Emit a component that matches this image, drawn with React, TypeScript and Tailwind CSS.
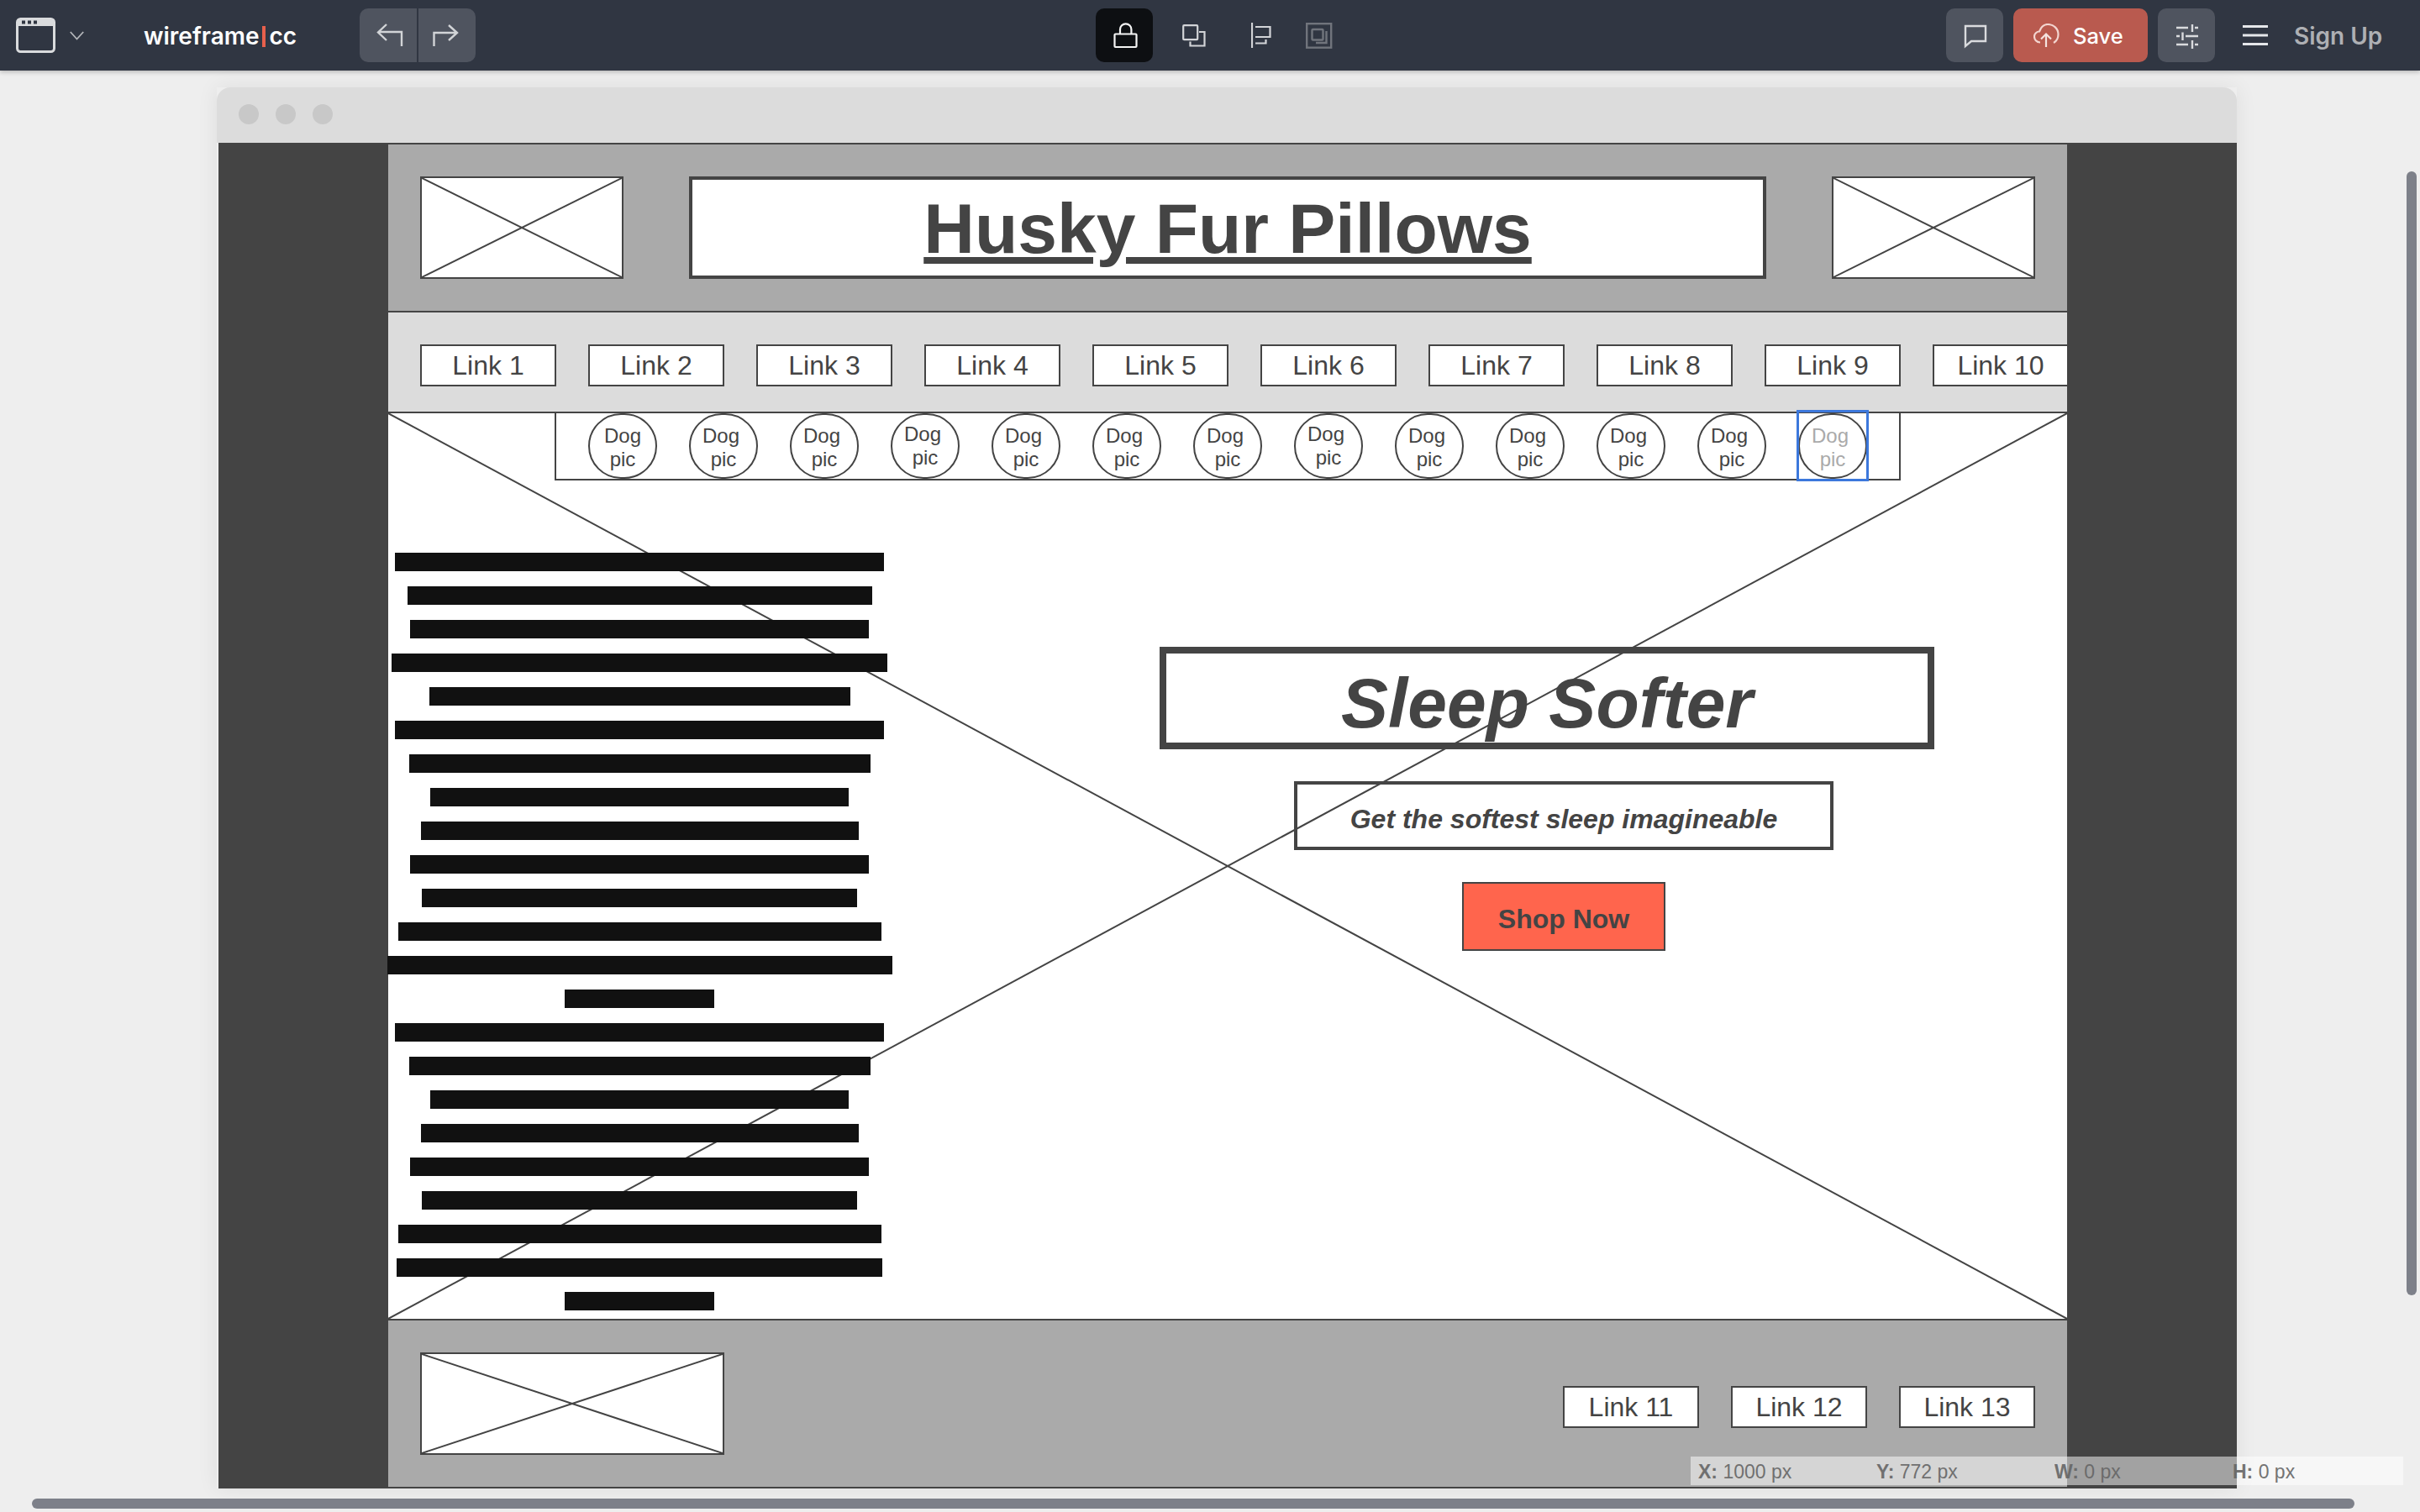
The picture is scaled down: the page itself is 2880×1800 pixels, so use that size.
import React from "react";

const BARS = [582, 553, 546, 590, 501, 582, 549, 498, 521, 546, 518, 575, 601, 178, 582, 549, 498, 521, 546, 518, 575, 578, 178];

function Placeholder({ w, h }: { w: number; h: number }) {
  return (
    <div className="shrink-0 border-2 border-[#444] bg-white" style={{ width: w, height: h }}>
      <svg className="block h-full w-full" viewBox={`0 0 ${w - 4} ${h - 4}`} preserveAspectRatio="none">
        <line x1="0" y1="0" x2={w - 4} y2={h - 4} stroke="#444" strokeWidth="2" />
        <line x1={w - 4} y1="0" x2="0" y2={h - 4} stroke="#444" strokeWidth="2" />
      </svg>
    </div>
  );
}

function LinkBox({ label }: { label: string }) {
  return (
    <div className="flex h-[50px] w-[162px] shrink-0 items-center justify-center border-2 border-[#444] bg-white text-[32px] leading-none text-[#444]">
      {label}
    </div>
  );
}

function DogCircle({ i }: { i: number }) {
  const last = i === 12;
  const first = i === 0;
  const raised = i === 3 || i === 7;
  return (
    <div className="relative h-[78px] w-[82px] shrink-0">
      <div
        className={
          "flex h-full w-full flex-col items-center justify-center rounded-full border-2 border-[#444] text-center text-[24px] leading-[28px] " +
          (last ? "text-[#aaa] " : "text-[#444] ") +
          (raised ? "" : "pt-[3px]")
        }
      >
        <span className={first ? "" : "pr-[6px]"}>Dog</span>
        <span>pic</span>
      </div>
      {last && <div className="absolute left-[-2px] top-[-4px] h-[85px] w-[86px] border-[3px] border-[#3c78dc]" />}
    </div>
  );
}

function Toolbar() {
  const ic = "#d2d4d7";
  return (
    <header className="relative z-10 flex h-[84px] items-center bg-[#303642] shadow-[0_2px_5px_rgba(0,0,0,0.22)] font-['Inter',sans-serif]">
      <div className="flex w-[1304px] shrink-0 items-center">
        <svg className="ml-[19px] shrink-0" width="47" height="42" viewBox="0 0 47 42">
          <rect x="1.5" y="1.5" width="44" height="39" rx="4" fill="none" stroke="#d9dbdd" strokeWidth="3" />
          <path d="M2 9 V5 Q2 1 6 1 H41 Q45 1 45 5 V9 Z" fill="#d9dbdd" />
          <rect x="2" y="8" width="43" height="2" fill="#d9dbdd" />
          <rect x="7" y="3.5" width="4" height="4" fill="#303642" />
          <rect x="14" y="3.5" width="4" height="4" fill="#303642" />
          <rect x="21" y="3.5" width="4" height="4" fill="#303642" />
        </svg>
        <svg className="ml-[17px] shrink-0" width="17" height="11" viewBox="0 0 17 11">
          <path d="M0.8 1 L8.5 9.5 L16.2 1" fill="none" stroke="#b4b6ba" strokeWidth="1.8" />
        </svg>
        <div className="ml-[71px] flex w-[186px] items-center pt-[2px] text-[28px] font-semibold leading-none text-white">
          <span>wireframe</span>
          <span className="mx-[4px] h-[25px] w-[4px] bg-[#e8604c]" />
          <span>cc</span>
        </div>
        <div className="ml-[71px] flex h-[64px] w-[138px] overflow-hidden rounded-[10px]">
          <div className="h-full w-[68px] bg-[#4f545f]">
            <svg width="68" height="64" viewBox="0 0 68 64">
              <path d="M50 45 V28 H22 M32 19 L22 28.5 L32 38" fill="none" stroke={ic} strokeWidth="2.4" />
            </svg>
          </div>
          <div className="ml-[2px] h-full w-[68px] bg-[#4f545f]">
            <svg width="68" height="64" viewBox="0 0 68 64">
              <path d="M18.5 45 V29 H46 M36 20 L46 29 L36 38" fill="none" stroke={ic} strokeWidth="2.4" />
            </svg>
          </div>
        </div>
      </div>
      <div className="flex w-[1012px] shrink-0 items-center">
        <div className="h-[64px] w-[68px] shrink-0 rounded-[10px] bg-[#0d0f12]">
          <svg width="68" height="64" viewBox="0 0 68 64">
            <rect x="22.5" y="30.5" width="26" height="15.5" rx="1" fill="none" stroke="#f4f4f4" strokeWidth="2.2" />
            <path d="M29 30 V25 A6.7 6.7 0 0 1 42.4 25 V30" fill="none" stroke="#f4f4f4" strokeWidth="2.2" />
          </svg>
        </div>
        <svg className="ml-[35px] shrink-0" width="28" height="27" viewBox="0 0 28 27">
          <rect x="1.2" y="1.2" width="17" height="17" rx="1" fill="none" stroke={ic} strokeWidth="2.2" />
          <path d="M20 9 H26.5 V25.5 H9.5 V20.5" fill="none" stroke={ic} strokeWidth="2.2" />
        </svg>
        <svg className="ml-[54px] shrink-0" width="24" height="30" viewBox="0 0 24 30">
          <path d="M1 0 V30" stroke={ic} strokeWidth="2.2" />
          <path d="M5 5 H22.5 V17 H5" fill="none" stroke={ic} strokeWidth="2.2" />
          <path d="M5 24.5 H17.5 V20" fill="none" stroke={ic} strokeWidth="2.2" />
        </svg>
        <svg className="ml-[41px] shrink-0" width="32" height="31" viewBox="0 0 32 31">
          <rect x="1.2" y="1.2" width="29" height="28.5" fill="none" stroke="#70747c" strokeWidth="2.4" />
          <rect x="7.5" y="8" width="13" height="12.5" rx="1" fill="none" stroke="#70747c" strokeWidth="2.4" />
          <path d="M24.5 10 V24 H12" fill="none" stroke="#70747c" strokeWidth="2.4" />
        </svg>
      </div>
      <div className="flex items-center">
        <div className="h-[64px] w-[68px] shrink-0 rounded-[10px] bg-[#4f545f]">
          <svg width="68" height="64" viewBox="0 0 68 64">
            <path d="M23 21 H47 V39 H30 L23 45 Z" fill="none" stroke="#dadbde" strokeWidth="2.4" />
          </svg>
        </div>
        <div className="ml-[12px] flex h-[64px] w-[160px] shrink-0 items-center rounded-[10px] bg-[#b95a4f] pl-[24px]">
          <svg className="shrink-0" width="31" height="28" viewBox="0 0 31 28">
            <path
              d="M8 22.5 C3.5 22.5 1 19 1 15.5 C1 12 4 9.5 7 9.5 C9 4 13 1 17 1 C24 1 29.5 6 29.5 13 C29.5 17 27.5 21 24 23"
              fill="none"
              stroke="#f3d5d0"
              strokeWidth="2.2"
            />
            <path d="M15 28 V13 M9 18.5 L15 12.5 L21 18.5" fill="none" stroke="#f5e3e0" strokeWidth="2.2" />
          </svg>
          <span className="ml-[16px] pt-[2px] text-[25.5px] font-medium leading-none text-white">Save</span>
        </div>
        <div className="ml-[12px] h-[64px] w-[68px] shrink-0 rounded-[10px] bg-[#4f545f]">
          <svg width="68" height="64" viewBox="0 0 68 64">
            <path
              d="M22 23 H36 M44 23 H48 M41 19 V28 M22 33 H26 M33 33 H48 M29.5 28.5 V38 M22 43 H36 M44 43 H48 M41 38 V48"
              fill="none"
              stroke="#dadbde"
              strokeWidth="2.4"
            />
          </svg>
        </div>
        <svg className="ml-[33px] shrink-0" width="30" height="24" viewBox="0 0 30 24">
          <path d="M0 1.5 H30 M0 12 H30 M0 22.5 H30" stroke="#e5e7ea" strokeWidth="2.8" />
        </svg>
        <span className="ml-[31px] pt-[2px] text-[28px] font-semibold leading-none text-[#aeb0b4]">Sign Up</span>
      </div>
    </header>
  );
}

function Page() {
  const dogs = Array.from({ length: 13 }, (_, i) => i);
  const links = [1, 2, 3, 4, 5, 6, 7, 8, 9, 10];
  return (
    <div className="h-[1600px] w-[1998px] font-['Liberation_Sans',Arial,sans-serif] text-[#444]">
      <div className="flex h-[200px] justify-between border-b-2 border-[#444] bg-[#aaa] px-[38px] pt-[38px]">
        <Placeholder w={242} h={122} />
        <div className="flex h-[122px] w-[1282px] items-center justify-center border-4 border-[#444] bg-white pt-[2px] text-[84px] font-bold leading-none underline">
          Husky Fur Pillows
        </div>
        <Placeholder w={242} h={122} />
      </div>
      <div className="flex h-[120px] gap-[38px] overflow-hidden border-b-2 border-[#444] bg-[#dcdcdc] pl-[38px] pt-[38px]">
        {links.map((n) => (
          <LinkBox key={n} label={`Link ${n}`} />
        ))}
      </div>
      <div className="relative h-[1080px] border-b-2 border-[#444] bg-white">
        <svg className="absolute inset-0 h-full w-full" viewBox="0 0 1998 1078" preserveAspectRatio="none">
          <line x1="0" y1="0" x2="1998" y2="1078" stroke="#444" strokeWidth="2" />
          <line x1="1998" y1="0" x2="0" y2="1078" stroke="#444" strokeWidth="2" />
        </svg>
        <div className="relative">
          <div className="ml-[198px] flex h-[80px] w-[1602px] gap-[38px] border-x-2 border-b-2 border-[#444] bg-white pl-[38px]">
            {dogs.map((i) => (
              <DogCircle key={i} i={i} />
            ))}
          </div>
          <div className="flex">
            <div className="flex w-[598px] shrink-0 flex-col items-center gap-[18px] pt-[86px]">
              {BARS.map((w, i) => (
                <div key={i} className="h-[22px] shrink-0 bg-[#111]" style={{ width: w }} />
              ))}
            </div>
            <div className="flex flex-col items-start pt-[198px]">
              <div className="ml-[320px] flex h-[122px] w-[922px] items-center justify-center border-8 border-[#444] pt-[12px] text-[84px] font-bold italic leading-none">
                Sleep Softer
              </div>
              <div className="ml-[480px] mt-[38px] flex h-[82px] w-[642px] items-center justify-center border-4 border-[#444] pt-[8px] text-[32px] font-bold italic leading-none">
                Get the softest sleep imagineable
              </div>
              <div className="ml-[680px] mt-[38px] flex h-[82px] w-[242px] items-center justify-center border-2 border-[#444] bg-[#ff654d] pt-[5px] text-[32px] font-bold leading-none">
                Shop Now
              </div>
            </div>
          </div>
        </div>
      </div>
      <div className="flex h-[200px] justify-between border-b-2 border-[#444] bg-[#aaa] px-[38px] pt-[38px]">
        <Placeholder w={362} h={122} />
        <div className="flex gap-[38px] pt-[40px]">
          <LinkBox label="Link 11" />
          <LinkBox label="Link 12" />
          <LinkBox label="Link 13" />
        </div>
      </div>
    </div>
  );
}

function Status() {
  const items = [
    ["X:", "1000 px"],
    ["Y:", "772 px"],
    ["W:", "0 px"],
    ["H:", "0 px"],
  ];
  return (
    <div className="absolute left-[2012px] top-[1734px] flex h-[34px] w-[848px] items-center bg-white/50 pl-[9px] pt-[3px] font-['Liberation_Sans',Arial,sans-serif] text-[23px] leading-none text-[#666]">
      {items.map(([a, b]) => (
        <div key={a} className="w-[212px] shrink-0 whitespace-pre opacity-90">
          <span className="font-bold">{a}</span> {b}
        </div>
      ))}
    </div>
  );
}

export default function App() {
  return (
    <div className="relative h-[1800px] w-[2880px] overflow-hidden bg-[#eee]">
      <Toolbar />
      <main className="pl-[258px] pt-[20px]">
        <div className="w-[2404px] shadow-[0_0_24px_rgba(0,0,0,0.07)]">
          <div className="flex h-[66px] items-center gap-[20px] rounded-t-[16px] bg-[#dcdcdc] pb-[2px] pl-[26px]">
            <span className="h-[24px] w-[24px] rounded-full bg-[#c8c8c8]" />
            <span className="h-[24px] w-[24px] rounded-full bg-[#c8c8c8]" />
            <span className="h-[24px] w-[24px] rounded-full bg-[#c8c8c8]" />
          </div>
          <div className="ml-[2px] h-[1602px] bg-[#444] pl-[202px] pt-[2px]">
            <Page />
          </div>
        </div>
      </main>
      <Status />
      <div className="absolute left-[38px] top-[1784px] h-[12px] w-[2764px] rounded-full bg-[#7d8089]" />
      <div className="absolute left-[2864px] top-[204px] h-[1338px] w-[12px] rounded-full bg-[#7d8089]" />
    </div>
  );
}
